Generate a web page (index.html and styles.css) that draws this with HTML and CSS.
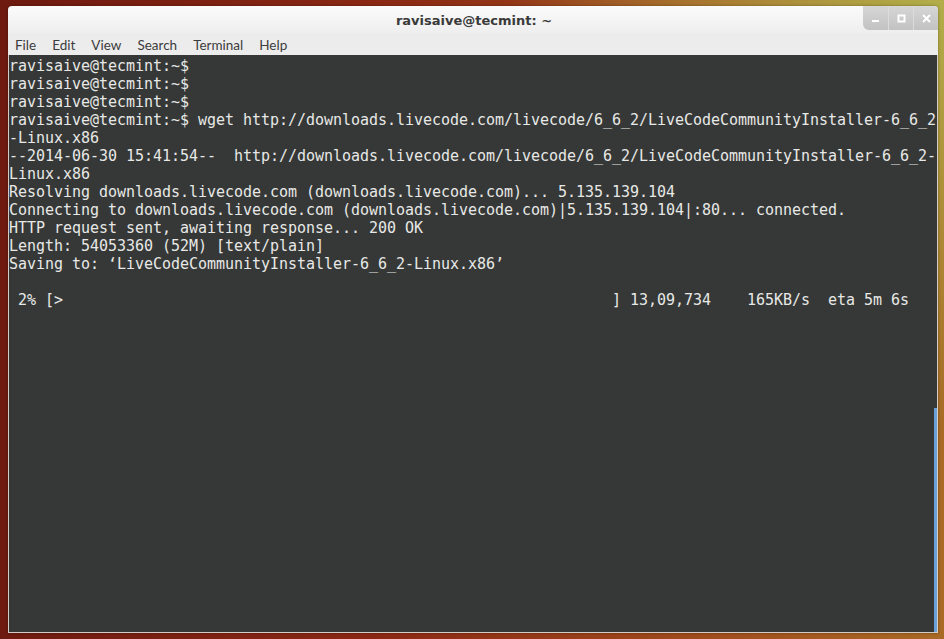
FILE: index.html
```html
<!DOCTYPE html>
<html lang="en">
<head>
  <meta charset="UTF-8" />
  <meta name="viewport" content="width=device-width, initial-scale=1.0" />
  <title>ravisaive@tecmint: ~</title>
  <link rel="stylesheet" href="styles.css">
</head>
<body>
  <!-- Terminal window -->
  <div class="window">
    <div class="titlebar">
      <span class="title">ravisaive@tecmint: ~</span>
      <!-- Window controls -->
      <div class="controls">
        <span class="ctl">
          <svg width="9" height="9" viewBox="0 0 9 9"><rect x="1" y="6" width="7" height="2" fill="#fff"/></svg>
        </span>
        <span class="ctl">
          <svg width="9" height="9" viewBox="0 0 9 9"><rect x="1.5" y="1.5" width="6" height="6" fill="none" stroke="#fff" stroke-width="2"/></svg>
        </span>
        <span class="ctl">
          <svg width="9" height="9" viewBox="0 0 9 9"><path d="M1 1 L8 8 M8 1 L1 8" stroke="#fff" stroke-width="2"/></svg>
        </span>
      </div>
    </div>

    <div class="menubar">
      <span>File</span>
      <span>Edit</span>
      <span>View</span>
      <span>Search</span>
      <span>Terminal</span>
      <span>Help</span>
    </div>

    <div class="terminal">
<pre class="output">ravisaive@tecmint:~$
ravisaive@tecmint:~$
ravisaive@tecmint:~$
ravisaive@tecmint:~$ wget http://downloads.livecode.com/livecode/6_6_2/LiveCodeCommunityInstaller-6_6_2
-Linux.x86
--2014-06-30 15:41:54--  http://downloads.livecode.com/livecode/6_6_2/LiveCodeCommunityInstaller-6_6_2-
Linux.x86
Resolving downloads.livecode.com (downloads.livecode.com)... 5.135.139.104
Connecting to downloads.livecode.com (downloads.livecode.com)|5.135.139.104|:80... connected.
HTTP request sent, awaiting response... 200 OK
Length: 54053360 (52M) [text/plain]
Saving to: ‘LiveCodeCommunityInstaller-6_6_2-Linux.x86’

 2% [&gt;                                                             ] 13,09,734    165KB/s  eta 5m 6s</pre>
      <!-- overlay scrollbar -->
      <div class="scrollbar"></div>
    </div>
  </div>
</body>
</html>
```

FILE: styles.css
```css
* {
  margin: 0;
  padding: 0;
  box-sizing: border-box;
}
body {
  width: 944px;
  height: 639px;
  overflow: hidden;
  padding: 6px 6px 6px 8px;
  font-family: "DejaVu Sans", sans-serif;
  /* desktop wallpaper behind the window */
  background:
    radial-gradient(circle at 100% 0, #b2ae4a 0, rgba(178, 174, 74, 0) 38%),
    linear-gradient(to right, #6e1a10 0%, #8a2814 40%, #a04c1c 75%, #a86a24 100%);
}
/* Window frame */
.window {
  width: 930px;
  height: 627px;
  display: flex;
  flex-direction: column;
  border-radius: 4px 4px 0 0;
  overflow: hidden;
  box-shadow: 0 0 3px rgba(0, 0, 0, 0.35);
}
.titlebar {
  position: relative;
  height: 27px;
  display: flex;
  align-items: center;
  justify-content: center;
  background: linear-gradient(#fbfbfb, #eeeeee);
}
.title {
  font-weight: bold;
  font-size: 13px;
  color: #3a3a3a;
  padding-top: 1px;
  padding-left: 2px;
}
/* Min / max / close buttons */
.controls {
  position: absolute;
  top: 0;
  right: 0;
  display: flex;
  height: 24px;
  border-bottom-left-radius: 6px;
  overflow: hidden;
  background: linear-gradient(#d6d6d6, #c2c2c2);
}
.ctl {
  width: 25px;
  display: flex;
  align-items: center;
  justify-content: center;
  border-left: 1px solid #dcdcdc;
}
.ctl:first-child {
  border-left: none;
}
/* Menu bar */
.menubar {
  height: 22px;
  display: flex;
  align-items: center;
  gap: 16px;
  padding-left: 7px;
  padding-top: 1px;
  background: #ececec;
  font-family: Lato, "DejaVu Sans", sans-serif;
  font-size: 13.5px;
  color: #3c3c3c;
}
/* Terminal body */
.terminal {
  position: relative;
  flex: 1;
  background: #353837;
  border-left: 1px solid #d6ccc6;
  border-right: 1px solid #d6ccc6;
  border-bottom: 1px solid #d6ccc6;
}
.output {
  padding: 2px 0 0 0;
  font-family: "DejaVu Sans Mono", monospace;
  font-size: 15px;
  letter-spacing: -0.03px;
  line-height: 18px;
  color: #e8e8e6;
  white-space: pre;
}
.scrollbar {
  position: absolute;
  right: 0;
  bottom: 0;
  top: 353px;
  width: 3px;
  background: #6a9fd8;
}
```
